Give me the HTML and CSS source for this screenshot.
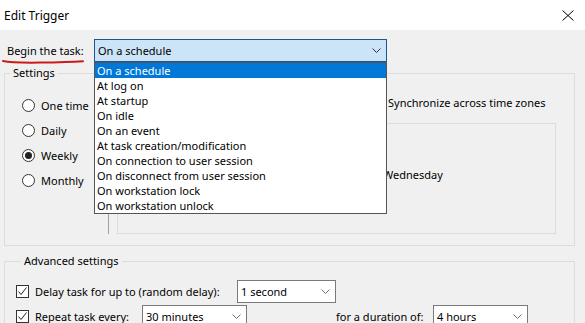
FILE: index.html
```html
<!DOCTYPE html>
<html>
    <head>
        <meta charset="utf-8">
        <link rel="stylesheet" href="styles.css">
    </head>
    <body>

        <div class = "titleBar">
            <span class = "titleText">Edit Trigger</span>
            <svg class = "closeIcon" width="12" height="11" viewBox="0 0 12 11"><path d="M0.5 0.5 L11.5 10.5 M11.5 0.5 L0.5 10.5" stroke="#000" stroke-width="1" fill="none"/></svg>
        </div>

        <div class = "beginRow">
            <span class = "beginLabel">Begin the task:</span>
            <div class = "combo comboOpen">
                <span>On a schedule</span>
                <svg class = "chevron" width="9" height="5" viewBox="0 0 9 5"><path d="M0.5 0.5 L4.5 4.5 L8.5 0.5" stroke="#333" fill="none"/></svg>
            </div>

            <!-- red marker stroke under the label -->
            <svg class = "redLine" width="90" height="6" viewBox="0 0 90 6"><path d="M3 2 Q 12 4 40 3.6 T 83 2.2" stroke="#cc1a1a" stroke-width="2" fill="none" stroke-linecap="round"/></svg>

            <ul class = "dropList">
                <li class = "selected">On a schedule</li>
                <li>At log on</li>
                <li>At startup</li>
                <li>On idle</li>
                <li>On an event</li>
                <li>At task creation/modification</li>
                <li>On connection to user session</li>
                <li>On disconnect from user session</li>
                <li>On workstation lock</li>
                <li>On workstation unlock</li>
            </ul>
        </div>

        <fieldset class = "group settingsGroup">
            <legend>Settings</legend>

            <div class = "settingsInner">

                <div class = "freqCol">
                    <div class = "radioRow"><span class = "radio"></span>One time</div>
                    <div class = "radioRow"><span class = "radio"></span>Daily</div>
                    <div class = "radioRow"><span class = "radio radioOn"></span>Weekly</div>
                    <div class = "radioRow"><span class = "radio"></span>Monthly</div>
                </div>

                <div class = "sepLine"></div>

                <!-- start fields and most day boxes sit under the open list -->
                <div class = "detailCol">
                    <div class = "startRow">
                        <span class = "startLabel"></span>
                        <span class = "field dateField"></span>
                        <span class = "field timeField"></span>
                        <span class = "check"></span>Synchronize across time zones
                    </div>

                    <div class = "recurBox">
                        <div class = "recurRow"><span class = "field weeksField"></span></div>
                        <div class = "daysGrid">
                            <div class = "dayCell"><span class = "check"></span></div>
                            <div class = "dayCell"><span class = "check"></span></div>
                            <div class = "dayCell"><span class = "check"></span></div>
                            <div class = "dayCell"><span class = "check"></span>Wednesday</div>
                            <div class = "dayCell"><span class = "check"></span></div>
                            <div class = "dayCell"><span class = "check"></span></div>
                            <div class = "dayCell"><span class = "check"></span></div>
                        </div>
                    </div>
                </div>

            </div>
        </fieldset>

        <fieldset class = "group advancedGroup">
            <legend>Advanced settings</legend>

            <div class = "advRow">
                <span class = "check"><svg width="11" height="11" viewBox="0 0 11 11"><path d="M1.5 5.5 L4 8.5 L9.5 1.5" stroke="#222" fill="none"/></svg></span>
                <span class = "delayLabel">Delay task for up to (random delay):</span>
                <div class = "combo delayCombo">
                    <span>1 second</span>
                    <svg class = "chevron" width="9" height="5" viewBox="0 0 9 5"><path d="M0.5 0.5 L4.5 4.5 L8.5 0.5" stroke="#707070" fill="none"/></svg>
                </div>
            </div>

            <div class = "advRow">
                <span class = "check"><svg width="11" height="11" viewBox="0 0 11 11"><path d="M1.5 5.5 L4 8.5 L9.5 1.5" stroke="#222" fill="none"/></svg></span>
                <span class = "repeatLabel">Repeat task every:</span>
                <div class = "combo repeatCombo">
                    <span>30 minutes</span>
                    <svg class = "chevron" width="9" height="5" viewBox="0 0 9 5"><path d="M0.5 0.5 L4.5 4.5 L8.5 0.5" stroke="#707070" fill="none"/></svg>
                </div>
                <span class = "durationLabel">for a duration of:</span>
                <div class = "combo durationCombo">
                    <span>4 hours</span>
                    <svg class = "chevron" width="9" height="5" viewBox="0 0 9 5"><path d="M0.5 0.5 L4.5 4.5 L8.5 0.5" stroke="#707070" fill="none"/></svg>
                </div>
            </div>
        </fieldset>

    </body>
</html>
```

FILE: styles.css
```css
body {
    margin: 0;
    width: 585px;
    height: 323px;
    overflow: hidden;
    background-color: #f0f0f0;
    font-family: "Noto Sans", "Open Sans", sans-serif;
    font-size: 11px;
    line-height: 15px;
    color: #000;
}

.titleBar {
    height: 30px;
    background-color: #fff;
    display: flex;
    align-items: center;
    justify-content: space-between;
    padding: 0 11px 0 4px;
}

.titleText {
    font-size: 12px;
}

.beginRow {
    position: relative;
    display: flex;
    align-items: center;
    margin-top: 9px;
    padding-left: 7px;
}

.beginLabel {
    width: 87px;
}

.combo {
    box-sizing: border-box;
    height: 23px;
    border: 1px solid #7a7a7a;
    background-color: #fff;
    display: flex;
    align-items: center;
    justify-content: space-between;
    padding: 0 5px 0 3px;
}

.comboOpen {
    width: 293px;
    background-color: #cce4f7;
    border-color: #1f5593;
}

.redLine {
    position: absolute;
    left: 0;
    top: 20px;
}

.dropList {
    position: absolute;
    left: 94px;
    top: 23px;
    width: 293px;
    box-sizing: border-box;
    margin: 0;
    padding: 0;
    list-style: none;
    background-color: #fff;
    border: 1px solid #555;
    z-index: 2;
}

.dropList li {
    height: 15px;
    line-height: 15px;
    padding-left: 2px;
}

.dropList .selected {
    background-color: #0078d7;
    color: #fff;
}

.group {
    margin: 3px 10px 0 4px;
    padding: 0;
    border: 1px solid #dcdcdc;
    min-width: 0;
}

.group legend {
    margin-left: 5px;
    padding: 0 3px;
    line-height: 16px;
}

.settingsInner {
    display: flex;
    padding: 9px 0 11px 0;
}

.freqCol {
    width: 103px;
    padding-top: 3px;
}

.radioRow {
    height: 25px;
    display: flex;
    align-items: center;
    padding-left: 17px;
}

.radio {
    box-sizing: border-box;
    width: 13px;
    height: 13px;
    border: 1px solid #333;
    border-radius: 50%;
    background-color: #fff;
    margin-right: 6px;
    display: flex;
    align-items: center;
    justify-content: center;
}

.radioOn::after {
    content: "";
    width: 7px;
    height: 7px;
    border-radius: 50%;
    background-color: #222;
}

.sepLine {
    width: 1px;
    background-color: #a0a0a0;
}

.detailCol {
    margin-left: 8px;
}

.startRow {
    height: 24px;
    display: flex;
    align-items: center;
    white-space: nowrap;
}

.startLabel {
    width: 37px;
}

.field {
    box-sizing: border-box;
    height: 21px;
    border: 1px solid #7a7a7a;
    background-color: #fff;
}

.dateField {
    width: 110px;
    margin-right: 6px;
}

.timeField {
    width: 95px;
    margin-right: 6px;
}

.check {
    box-sizing: border-box;
    width: 13px;
    height: 13px;
    border: 1px solid #333;
    background-color: #fff;
    margin-right: 4px;
    flex-shrink: 0;
}

.check svg {
    display: block;
}

.recurBox {
    box-sizing: border-box;
    width: 439px;
    height: 111px;
    margin-top: 9px;
    border: 1px solid #dcdcdc;
    padding: 8px 15px;
}

.recurRow {
    height: 20px;
    display: flex;
    align-items: center;
    padding-left: 70px;
}

.weeksField {
    width: 40px;
}

.daysGrid {
    display: grid;
    grid-template-columns: repeat(4, 78px);
    grid-auto-rows: 20px;
    margin-top: 12px;
    row-gap: 5px;
}

.dayCell {
    display: flex;
    align-items: center;
}

.dayCell .check {
    margin-right: 3px;
}

.advancedGroup {
    margin-top: 7px;
    padding: 10px 0 10px 11px;
}

.advancedGroup legend {
    margin-bottom: 1px;
}

.advRow {
    height: 23px;
    display: flex;
    align-items: center;
    margin-bottom: 2px;
}

.advRow .check {
    margin-right: 6px;
}

.delayLabel {
    width: 202px;
}

.delayCombo {
    width: 99px;
}

.repeatLabel {
    width: 107px;
}

.repeatCombo {
    width: 105px;
}

.durationLabel {
    margin-left: 89px;
    width: 97px;
}

.durationCombo {
    width: 95px;
}
```
